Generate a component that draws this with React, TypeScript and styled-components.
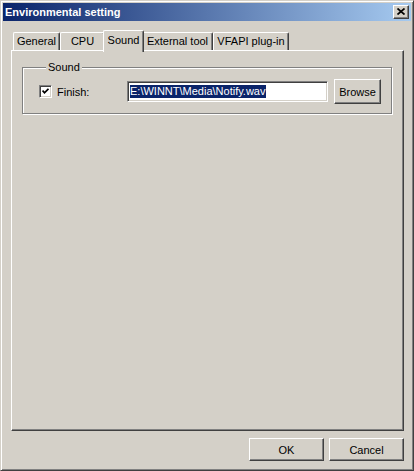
import React from "react";
import styled, { createGlobalStyle, css } from "styled-components";

const Global = createGlobalStyle`
  html, body { margin: 0; padding: 0; background: #D4D0C8; }
  body { font-family: "Liberation Sans", Arial, sans-serif; font-size: 11px; color: #000; }
  * { box-sizing: border-box; }
`;

const raised = css`
  border: 1px solid;
  border-color: #ffffff #404040 #404040 #ffffff;
  box-shadow: inset -1px -1px 0 #808080, inset 1px 1px 0 #d4d0c8;
  background: #d4d0c8;
`;

const Window = styled.div`
  width: 414px;
  height: 471px;
  background: #d4d0c8;
  border: 1px solid;
  border-color: #d4d0c8 #404040 #404040 #d4d0c8;
  box-shadow: inset 1px 1px 0 #ffffff, inset -1px -1px 0 #808080;
  padding: 2px;
  display: flex;
  flex-direction: column;
`;

const TitleBar = styled.div`
  height: 18px;
  flex: none;
  background: linear-gradient(to right, #0a246a, #a6caf0);
  color: #ffffff;
  font-weight: bold;
  font-size: 11px;
  display: flex;
  align-items: center;
  justify-content: space-between;
  padding: 0 2px 0 2px;
`;

const CloseButton = styled.div`
  ${raised};
  width: 16px;
  height: 14px;
  display: flex;
  align-items: center;
  justify-content: center;
  padding-bottom: 1px;
`;

const Body = styled.div`
  flex: 1;
  display: flex;
  flex-direction: column;
  padding: 9px 7px 0 8px;
`;

const TabRow = styled.div`
  display: flex;
  align-items: flex-end;
  height: 20px;
  padding-left: 2px;
  flex: none;
`;

const Tab = styled.div<{ $w: number; $active?: boolean }>`
  width: ${(p) => p.$w}px;
  height: ${(p) => (p.$active ? 22 : 18)}px;
  margin: ${(p) => (p.$active ? "0 -2px -2px -2px" : "0")};
  padding: ${(p) => (p.$active ? "0 2px 3px" : "0 0 1px")};
  position: relative;
  z-index: ${(p) => (p.$active ? 2 : 1)};
  background: #d4d0c8;
  border-top: 1px solid #ffffff;
  border-left: 1px solid #ffffff;
  border-right: 1px solid #404040;
  border-radius: 2px 2px 0 0;
  box-shadow: inset -1px 0 0 #808080;
  display: flex;
  align-items: center;
  justify-content: center;
  white-space: nowrap;
`;

const Panel = styled.div`
  flex: 1;
  border: 1px solid;
  border-color: #ffffff #404040 #404040 #ffffff;
  box-shadow: inset -1px -1px 0 #808080;
  padding: 10px 11px 0 10px;
  display: flex;
  flex-direction: column;
`;

const Group = styled.fieldset`
  margin: 0;
  padding: 5px 0 9px 16px;
  min-width: 0;
  border: 1px solid #808080;
  box-shadow: inset 1px 1px 0 #ffffff, 1px 1px 0 #ffffff;
`;

const Legend = styled.legend`
  margin-left: 7px;
  padding: 0 2px;
  line-height: 13px;
  background: #d4d0c8;
`;

const Row = styled.div`
  display: flex;
  align-items: center;
  height: 25px;
`;

const CheckBox = styled.div`
  width: 13px;
  height: 13px;
  background: #ffffff;
  border: 1px solid;
  border-color: #808080 #ffffff #ffffff #808080;
  box-shadow: inset 1px 1px 0 #404040, inset -1px -1px 0 #d4d0c8;
  display: flex;
  align-items: center;
  justify-content: center;
  flex: none;
`;

const Label = styled.span`
  width: 70px;
  margin-left: 5px;
  flex: none;
`;

const Field = styled.div`
  width: 201px;
  height: 21px;
  flex: none;
  background: #ffffff;
  border: 1px solid;
  border-color: #808080 #ffffff #ffffff #808080;
  box-shadow: inset 1px 1px 0 #404040, inset -1px -1px 0 #d4d0c8;
  padding: 0 2px;
  display: flex;
  align-items: center;
  white-space: nowrap;
  overflow: hidden;
`;

const Selected = styled.span`
  background: #0a246a;
  color: #ffffff;
  line-height: 13px;
`;

const Button = styled.div<{ $w: number; $h: number }>`
  ${raised};
  width: ${(p) => p.$w}px;
  height: ${(p) => p.$h}px;
  flex: none;
  display: flex;
  align-items: center;
  justify-content: center;
`;

const Footer = styled.div`
  display: flex;
  justify-content: flex-end;
  gap: 5px;
  padding: 7px 0 7px;
  flex: none;
`;

const BrowseButton = styled(Button)`
  margin-left: 6px;
`;

export default function App() {
  return (
    <>
      <Global />
      <Window>
        <TitleBar>
          <span>Environmental setting</span>
          <CloseButton>
            <svg width="8" height="7" viewBox="0 0 8 7">
              <path d="M0.5 0.5 L7.5 6.5 M7.5 0.5 L0.5 6.5" stroke="#000" strokeWidth="1.7" fill="none" />
            </svg>
          </CloseButton>
        </TitleBar>
        <Body>
          <TabRow>
            <Tab $w={47}>General</Tab>
            <Tab $w={45}>CPU</Tab>
            <Tab $w={41} $active>
              Sound
            </Tab>
            <Tab $w={71}>External tool</Tab>
            <Tab $w={76}>VFAPI plug-in</Tab>
          </TabRow>
          <Panel>
            <Group>
              <Legend>Sound</Legend>
              <Row>
                <CheckBox>
                  <svg width="7" height="7" viewBox="0 0 7 7">
                    <path d="M0.5 2.5 L2.5 4.8 L6.5 0.8" stroke="#000" strokeWidth="1.8" fill="none" />
                  </svg>
                </CheckBox>
                <Label>Finish:</Label>
                <Field>
                  <Selected>E:\WINNT\Media\Notify.wav</Selected>
                </Field>
                <BrowseButton $w={47} $h={25}>
                  Browse
                </BrowseButton>
              </Row>
            </Group>
          </Panel>
          <Footer>
            <Button $w={75} $h={23}>OK</Button>
            <Button $w={75} $h={23}>Cancel</Button>
          </Footer>
        </Body>
      </Window>
    </>
  );
}
